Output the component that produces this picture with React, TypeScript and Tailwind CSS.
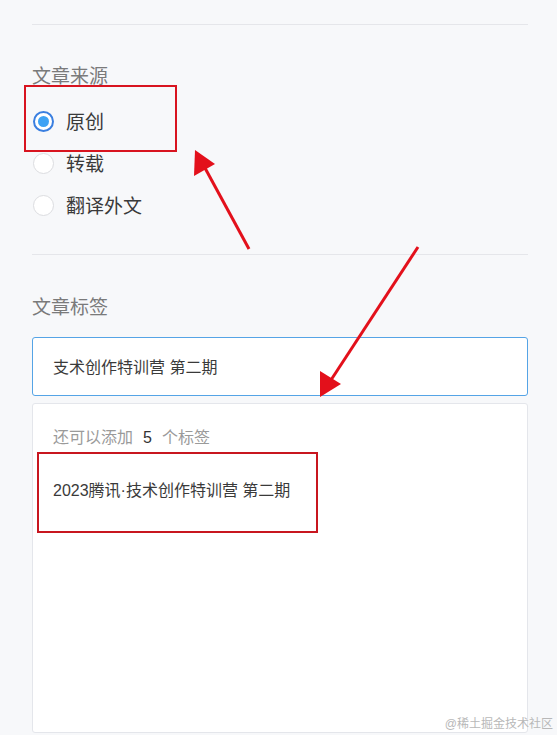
import React from 'react';

const Radio: React.FC<{ label: string; checked?: boolean }> = ({ label, checked }) => (
    <div className="flex items-center h-[42px]">
        {checked ? (
            <span className="ml-[33px] w-[21px] h-[21px] rounded-full border-2 border-[#3a7fe0] bg-white flex items-center justify-center">
                <span className="w-[11px] h-[11px] rounded-full bg-[#3ea2f4]" />
            </span>
        ) : (
            <span className="ml-[33px] w-[21px] h-[21px] rounded-full border border-[#dcdde0] bg-white" />
        )}
        <span className="ml-[12px] pt-[3px] text-[19px] leading-[28px] text-[#3a3a3a]">{label}</span>
    </div>
);

const App: React.FC = () => {
    return (
        <div
            className="relative w-[557px] h-[735px] overflow-hidden bg-[#f7f8fa]"
            style={{ fontFamily: '"Liberation Sans", "Noto Sans CJK SC", sans-serif' }}
        >
            <div className="pt-[24px]">
                <div className="ml-8 w-[496px] h-px bg-[#e5e6ea]" />

                {/* 文章来源 */}
                <div className="ml-8 mt-[36px] pt-[2px] h-[28px] text-[19px] leading-[28px] text-[#7a7a7a]">文章来源</div>
                <div className="mt-[11px]">
                    <Radio label="原创" checked />
                    <Radio label="转载" />
                    <Radio label="翻译外文" />
                </div>

                <div className="ml-8 mt-[28px] w-[496px] h-px bg-[#e5e6ea]" />

                {/* 文章标签 */}
                <div className="ml-8 mt-[37px] pt-[2px] h-[28px] text-[19px] leading-[28px] text-[#7a7a7a]">文章标签</div>
                <div className="ml-8 mt-[17px] w-[496px] h-[59px] rounded-[3px] border border-[#55a4e6] bg-white flex items-center pl-[20px] pt-[2px] text-[16px] text-[#3a3a3a]">
                    支术创作特训营 第二期
                </div>

                <div className="ml-8 mt-[7px] w-[496px] h-[330px] rounded-[3px] border border-[#e4e6eb] bg-white pl-[20px] pt-[22px]">
                    <div className="text-[16px] leading-[24px] text-[#9a9a9a]">
                        还可以添加<span className="text-[#333] px-[10px]">5</span>个标签
                    </div>
                    <div className="mt-[29px] text-[16px] leading-[24px] text-[#3a3a3a]">
                        2023腾讯·技术创作特训营 第二期
                    </div>
                </div>
            </div>

            {/* annotation boxes */}
            <div className="absolute left-[24px] top-[85px] w-[153px] h-[67px] border-2 border-[#d8141f]" />
            <div className="absolute left-[37px] top-[452px] w-[281px] h-[81px] border-2 border-[#c8161f]" />

            {/* annotation arrows */}
            <svg className="absolute left-0 top-0" width="557" height="735">
                <line x1="249" y1="249" x2="205" y2="168" stroke="#e3101b" strokeWidth="3" />
                <polygon points="195,150 194,176 215,164" fill="#e3101b" />
                <line x1="418" y1="247" x2="331" y2="380" stroke="#e3101b" strokeWidth="3" />
                <polygon points="320,397 320,371 341,384" fill="#e3101b" />
            </svg>

            <div className="absolute right-[4px] bottom-[4px] text-[12px] leading-[14px] text-[#b8b8b8]">
                @稀土掘金技术社区
            </div>
        </div>
    );
};

export default App;
